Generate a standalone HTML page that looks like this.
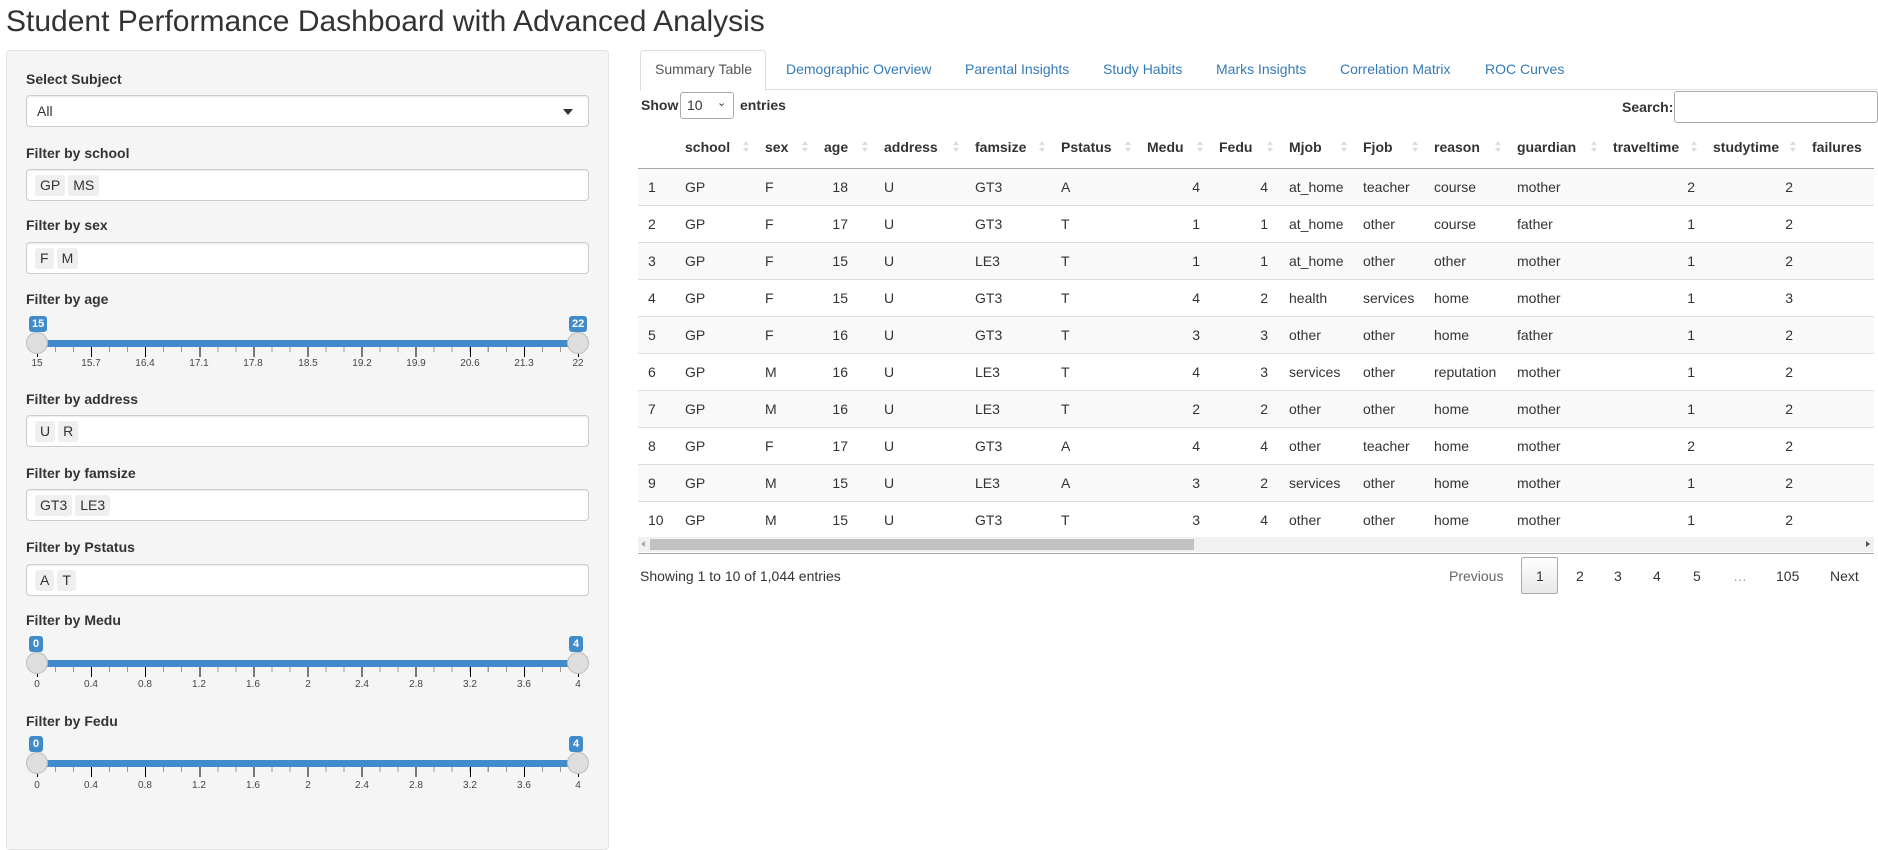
<!DOCTYPE html>
<html><head><meta charset="utf-8">
<style>
*{box-sizing:border-box}
body{margin:0;width:1878px;height:810px;overflow:hidden;background:#fff;font-family:"Liberation Sans",Arial,sans-serif;font-size:14px;color:#333;position:relative}
.abs{position:absolute}
h2{position:absolute;left:6px;top:4px;margin:0;font-size:30px;font-weight:400;line-height:36px;white-space:nowrap}
.panel{position:absolute;left:6px;top:50px;width:603px;height:800px;background:#f5f5f5;border:1px solid #e3e3e3;border-radius:4px}
.lbl{position:absolute;left:26px;font-weight:bold;font-size:14px;line-height:16px}
.inp{position:absolute;left:26px;width:563px;height:32px;background:#fff;border:1px solid #ccc;border-radius:4px;box-shadow:inset 0 1px 1px rgba(0,0,0,.075)}
.tag{display:inline-block;background:#efefef;padding:0 5px;margin:5px 0 0 0;line-height:21px;height:21px;font-size:14px;color:#333;border-radius:3px}
.tags{padding-left:8px;display:flex;gap:3px}
.track{position:absolute;left:37px;width:541px;height:7px;background:#428bca}
.handle{position:absolute;width:22px;height:22px;border-radius:50%;background:#dedede;border:1px solid #bbb}
.badge{position:absolute;height:16px;padding:0 3px;min-width:14px;background:#428bca;color:#fff;font-size:11px;font-weight:bold;line-height:16px;border-radius:3px;text-align:center}
.ticks{position:absolute;left:37px;width:542px;height:10px;background:repeating-linear-gradient(90deg,#000 0 1px,transparent 1px 54.1px)}
.mticks{position:absolute;left:37px;width:542px;height:5px;background:repeating-linear-gradient(90deg,#999 0 1px,transparent 1px 18.03px)}
.tl{position:absolute;font-size:10px;color:#444;transform:translateX(-50%);line-height:12px}
.tab{position:absolute;top:60px;color:#337ab7;font-size:14px;line-height:18px;white-space:nowrap}
table{border-collapse:collapse;table-layout:fixed;position:absolute;left:0;top:0;width:1264px}
td,th{padding:0 10px;height:37px;white-space:nowrap;overflow:hidden;text-align:left;font-size:14px}
th{font-weight:bold;position:relative;height:41px;border-bottom:1px solid #aaa}
th i{position:absolute;right:6px;top:14px;width:6px;height:12px;opacity:.35}
th i:before{content:"";position:absolute;left:0;top:0;border:3px solid transparent;border-bottom:4px solid #999;border-top:0}
th i:after{content:"";position:absolute;left:0;top:7px;border:3px solid transparent;border-top:4px solid #999;border-bottom:0}
td{border-top:1px solid #ddd;color:#333}
tr.o td{background:#f9f9f9}
td.n{text-align:right}
.pg{position:absolute;top:567px;font-size:14px;line-height:18px;color:#333}
</style></head><body>
<h2>Student Performance Dashboard with Advanced Analysis</h2>

<div class="panel"></div>
<div class="lbl" style="top:71px">Select Subject</div>
<div class="inp" style="top:95px;height:32px"><span class="abs" style="left:10px;top:7px">All</span><span class="abs" style="left:536px;top:13px;border:5px solid transparent;border-top:6px solid #333;border-bottom:0"></span></div>

<div class="lbl" style="top:145px">Filter by school</div>
<div class="inp tags" style="top:169px"><span class="tag">GP</span><span class="tag">MS</span></div>
<div class="lbl" style="top:217px">Filter by sex</div>
<div class="inp tags" style="top:242px"><span class="tag">F</span><span class="tag">M</span></div>

<div class="lbl" style="top:291px">Filter by age</div>
<div class="track" style="top:340px"></div>
<div class="mticks" style="top:347px"></div><div class="ticks" style="top:347px"></div>
<div class="handle" style="left:26px;top:332px"></div><div class="handle" style="left:567px;top:332px"></div>
<div class="badge" style="left:29px;top:316px">15</div><div class="badge" style="left:569px;top:316px">22</div>
<div class="tl" style="left:37px;top:358px">15</div><div class="tl" style="left:91px;top:358px">15.7</div><div class="tl" style="left:145px;top:358px">16.4</div><div class="tl" style="left:199px;top:358px">17.1</div><div class="tl" style="left:253px;top:358px">17.8</div><div class="tl" style="left:308px;top:358px">18.5</div><div class="tl" style="left:362px;top:358px">19.2</div><div class="tl" style="left:416px;top:358px">19.9</div><div class="tl" style="left:470px;top:358px">20.6</div><div class="tl" style="left:524px;top:358px">21.3</div><div class="tl" style="left:578px;top:358px">22</div>

<div class="lbl" style="top:391px">Filter by address</div>
<div class="inp tags" style="top:415px"><span class="tag">U</span><span class="tag">R</span></div>
<div class="lbl" style="top:465px">Filter by famsize</div>
<div class="inp tags" style="top:489px"><span class="tag">GT3</span><span class="tag">LE3</span></div>
<div class="lbl" style="top:539px">Filter by Pstatus</div>
<div class="inp tags" style="top:564px"><span class="tag">A</span><span class="tag">T</span></div>

<div class="lbl" style="top:612px">Filter by Medu</div>
<div class="track" style="top:660px"></div>
<div class="mticks" style="top:667px"></div><div class="ticks" style="top:667px"></div>
<div class="handle" style="left:26px;top:652px"></div><div class="handle" style="left:567px;top:652px"></div>
<div class="badge" style="left:29px;top:636px">0</div><div class="badge" style="left:569px;top:636px">4</div>
<div class="tl" style="left:37px;top:679px">0</div><div class="tl" style="left:91px;top:679px">0.4</div><div class="tl" style="left:145px;top:679px">0.8</div><div class="tl" style="left:199px;top:679px">1.2</div><div class="tl" style="left:253px;top:679px">1.6</div><div class="tl" style="left:308px;top:679px">2</div><div class="tl" style="left:362px;top:679px">2.4</div><div class="tl" style="left:416px;top:679px">2.8</div><div class="tl" style="left:470px;top:679px">3.2</div><div class="tl" style="left:524px;top:679px">3.6</div><div class="tl" style="left:578px;top:679px">4</div>

<div class="lbl" style="top:713px">Filter by Fedu</div>
<div class="track" style="top:760px"></div>
<div class="mticks" style="top:767px"></div><div class="ticks" style="top:767px"></div>
<div class="handle" style="left:26px;top:752px"></div><div class="handle" style="left:567px;top:752px"></div>
<div class="badge" style="left:29px;top:736px">0</div><div class="badge" style="left:569px;top:736px">4</div>
<div class="tl" style="left:37px;top:780px">0</div><div class="tl" style="left:91px;top:780px">0.4</div><div class="tl" style="left:145px;top:780px">0.8</div><div class="tl" style="left:199px;top:780px">1.2</div><div class="tl" style="left:253px;top:780px">1.6</div><div class="tl" style="left:308px;top:780px">2</div><div class="tl" style="left:362px;top:780px">2.4</div><div class="tl" style="left:416px;top:780px">2.8</div><div class="tl" style="left:470px;top:780px">3.2</div><div class="tl" style="left:524px;top:780px">3.6</div><div class="tl" style="left:578px;top:780px">4</div>

<!-- tabs -->
<div class="abs" style="left:640px;top:89px;width:1238px;border-top:1px solid #ddd"></div>
<div class="abs" style="left:640px;top:50px;width:126px;height:41px;background:#fff;border:1px solid #ddd;border-bottom-color:#fff;border-radius:4px 4px 0 0"></div>
<div class="tab" style="left:655px;color:#555">Summary Table</div>
<div class="tab" style="left:786px">Demographic Overview</div>
<div class="tab" style="left:965px">Parental Insights</div>
<div class="tab" style="left:1103px">Study Habits</div>
<div class="tab" style="left:1216px">Marks Insights</div>
<div class="tab" style="left:1340px">Correlation Matrix</div>
<div class="tab" style="left:1485px">ROC Curves</div>

<div class="abs" style="left:641px;top:97px;font-weight:bold;line-height:16px">Show</div>
<div class="abs" style="left:680px;top:92px;width:54px;height:27px;border:1px solid #aaa;border-radius:3px;background:#fff"><span class="abs" style="left:6px;top:4px">10</span><span class="abs" style="left:36px;top:3px;font-size:11px">&#8964;</span></div>
<div class="abs" style="left:740px;top:97px;font-weight:bold;line-height:16px">entries</div>
<div class="abs" style="left:1622px;top:99px;font-weight:bold;line-height:16px">Search:</div>
<div class="abs" style="left:1674px;top:91px;width:204px;height:32px;border:1px solid #aaa;border-radius:3px;background:#fff"></div>

<div class="abs" style="left:638px;top:127px;width:1236px;height:410px;overflow:hidden">
<table>
<colgroup><col style="width:37px"><col style="width:80px"><col style="width:59px"><col style="width:60px"><col style="width:91px"><col style="width:86px"><col style="width:86px"><col style="width:72px"><col style="width:70px"><col style="width:74px"><col style="width:71px"><col style="width:83px"><col style="width:96px"><col style="width:100px"><col style="width:99px"><col style="width:100px"></colgroup>
<tr><th></th><th>school<i></i></th><th>sex<i></i></th><th>age<i></i></th><th>address<i></i></th><th>famsize<i></i></th><th>Pstatus<i></i></th><th>Medu<i></i></th><th>Fedu<i></i></th><th>Mjob<i></i></th><th>Fjob<i></i></th><th>reason<i></i></th><th>guardian<i></i></th><th>traveltime<i></i></th><th>studytime<i></i></th><th>failures<i></i></th></tr>
<tr class="o"><td>1</td><td>GP</td><td>F</td><td class="n" style="padding-right:26px">18</td><td>U</td><td>GT3</td><td>A</td><td class="n" style="padding-right:9px">4</td><td class="n" style="padding-right:11px">4</td><td>at_home</td><td>teacher</td><td>course</td><td>mother</td><td class="n" style="padding-right:8px">2</td><td class="n" style="padding-right:9px">2</td><td></td></tr>
<tr><td>2</td><td>GP</td><td>F</td><td class="n" style="padding-right:26px">17</td><td>U</td><td>GT3</td><td>T</td><td class="n" style="padding-right:9px">1</td><td class="n" style="padding-right:11px">1</td><td>at_home</td><td>other</td><td>course</td><td>father</td><td class="n" style="padding-right:8px">1</td><td class="n" style="padding-right:9px">2</td><td></td></tr>
<tr class="o"><td>3</td><td>GP</td><td>F</td><td class="n" style="padding-right:26px">15</td><td>U</td><td>LE3</td><td>T</td><td class="n" style="padding-right:9px">1</td><td class="n" style="padding-right:11px">1</td><td>at_home</td><td>other</td><td>other</td><td>mother</td><td class="n" style="padding-right:8px">1</td><td class="n" style="padding-right:9px">2</td><td></td></tr>
<tr><td>4</td><td>GP</td><td>F</td><td class="n" style="padding-right:26px">15</td><td>U</td><td>GT3</td><td>T</td><td class="n" style="padding-right:9px">4</td><td class="n" style="padding-right:11px">2</td><td>health</td><td>services</td><td>home</td><td>mother</td><td class="n" style="padding-right:8px">1</td><td class="n" style="padding-right:9px">3</td><td></td></tr>
<tr class="o"><td>5</td><td>GP</td><td>F</td><td class="n" style="padding-right:26px">16</td><td>U</td><td>GT3</td><td>T</td><td class="n" style="padding-right:9px">3</td><td class="n" style="padding-right:11px">3</td><td>other</td><td>other</td><td>home</td><td>father</td><td class="n" style="padding-right:8px">1</td><td class="n" style="padding-right:9px">2</td><td></td></tr>
<tr><td>6</td><td>GP</td><td>M</td><td class="n" style="padding-right:26px">16</td><td>U</td><td>LE3</td><td>T</td><td class="n" style="padding-right:9px">4</td><td class="n" style="padding-right:11px">3</td><td>services</td><td>other</td><td>reputation</td><td>mother</td><td class="n" style="padding-right:8px">1</td><td class="n" style="padding-right:9px">2</td><td></td></tr>
<tr class="o"><td>7</td><td>GP</td><td>M</td><td class="n" style="padding-right:26px">16</td><td>U</td><td>LE3</td><td>T</td><td class="n" style="padding-right:9px">2</td><td class="n" style="padding-right:11px">2</td><td>other</td><td>other</td><td>home</td><td>mother</td><td class="n" style="padding-right:8px">1</td><td class="n" style="padding-right:9px">2</td><td></td></tr>
<tr><td>8</td><td>GP</td><td>F</td><td class="n" style="padding-right:26px">17</td><td>U</td><td>GT3</td><td>A</td><td class="n" style="padding-right:9px">4</td><td class="n" style="padding-right:11px">4</td><td>other</td><td>teacher</td><td>home</td><td>mother</td><td class="n" style="padding-right:8px">2</td><td class="n" style="padding-right:9px">2</td><td></td></tr>
<tr class="o"><td>9</td><td>GP</td><td>M</td><td class="n" style="padding-right:26px">15</td><td>U</td><td>LE3</td><td>A</td><td class="n" style="padding-right:9px">3</td><td class="n" style="padding-right:11px">2</td><td>services</td><td>other</td><td>home</td><td>mother</td><td class="n" style="padding-right:8px">1</td><td class="n" style="padding-right:9px">2</td><td></td></tr>
<tr><td>10</td><td>GP</td><td>M</td><td class="n" style="padding-right:26px">15</td><td>U</td><td>GT3</td><td>T</td><td class="n" style="padding-right:9px">3</td><td class="n" style="padding-right:11px">4</td><td>other</td><td>other</td><td>home</td><td>mother</td><td class="n" style="padding-right:8px">1</td><td class="n" style="padding-right:9px">2</td><td></td></tr>
</table>
</div>
<!-- scrollbar -->
<div class="abs" style="left:638px;top:537px;width:1236px;height:15px;background:#f1f1f1"></div>
<div class="abs" style="left:650px;top:539px;width:544px;height:11px;background:#c1c1c1"></div>
<div class="abs" style="left:641px;top:541px;border:3px solid transparent;border-right:4px solid #aaa;border-left:0"></div>
<div class="abs" style="left:1866px;top:541px;border:3px solid transparent;border-left:4px solid #505050;border-right:0"></div>
<div class="abs" style="left:638px;top:553px;width:1236px;border-top:1px solid #aaa"></div>

<div class="pg" style="left:640px">Showing 1 to 10 of 1,044 entries</div>
<div class="pg" style="left:1449px;color:#666">Previous</div>
<div class="abs" style="left:1521px;top:557px;width:37px;height:37px;border:1px solid #aaa;border-radius:2px;background:linear-gradient(#fff,#e8e8e8)"></div>
<div class="pg" style="left:1536px">1</div>
<div class="pg" style="left:1576px">2</div>
<div class="pg" style="left:1614px">3</div>
<div class="pg" style="left:1653px">4</div>
<div class="pg" style="left:1693px">5</div>
<div class="pg" style="left:1733px;color:#999">…</div>
<div class="pg" style="left:1776px">105</div>
<div class="pg" style="left:1830px">Next</div>
</body></html>
